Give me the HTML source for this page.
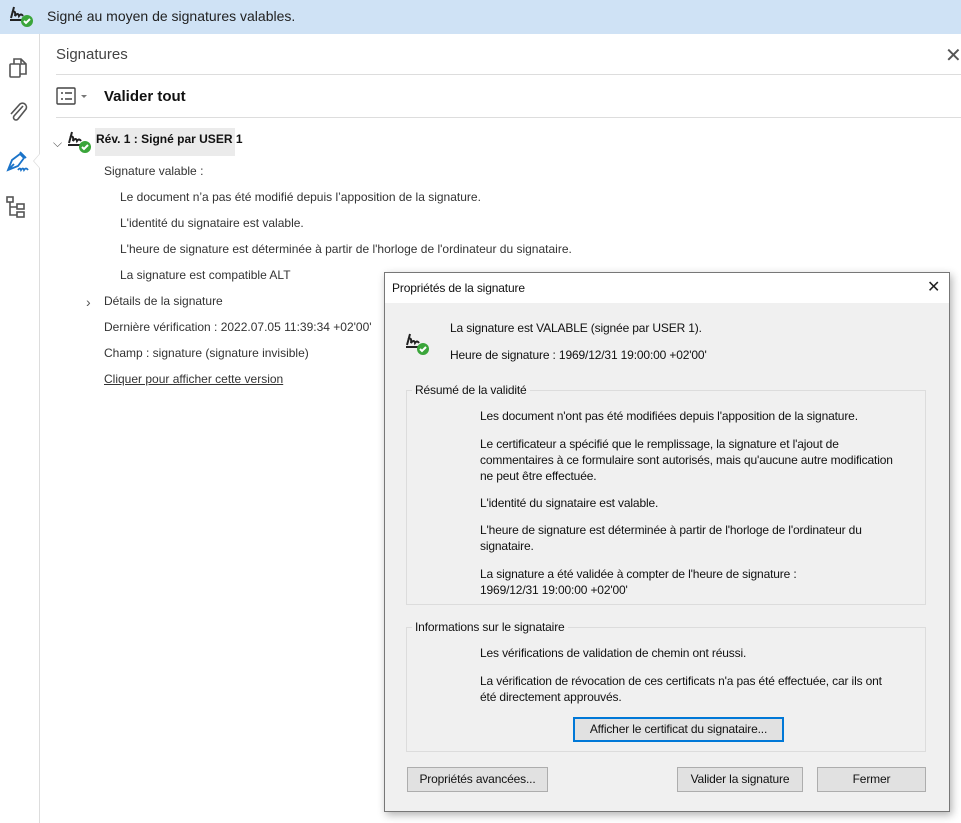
<!DOCTYPE html>
<html><head><meta charset="utf-8"><style>
*{margin:0;padding:0;box-sizing:border-box}
body{width:961px;height:823px;overflow:hidden;background:#fff;font-family:"Liberation Sans",sans-serif;position:relative;color:#222}
.a{position:absolute;white-space:nowrap}
.t{font-size:12px;color:#333}
.d{font-size:12px;color:#111;letter-spacing:-0.15px}
.btn{position:absolute;background:#e1e1e1;border:1px solid #adadad;font-size:12px;text-align:center;color:#111;letter-spacing:-0.15px}
</style></head><body>
<div class="a" style="left:0;top:0;width:961px;height:34px;background:#cfe2f5"></div>
<svg class="a" style="left:8px;top:4px" width="28" height="24" viewBox="0 0 28 24"><path d="M3 14 L6 3 M4 8 Q8 6 7 12 Q10 8 11 12 Q13 9 15 12" stroke="#222" stroke-width="2" fill="none"/><path d="M2 16 H14" stroke="#222" stroke-width="2"/><circle cx="19" cy="17" r="6" fill="#3aa53a"/><path d="M16 17 l2 2 4-4" stroke="#fff" stroke-width="2" fill="none"/></svg>
<div class="a" style="left:47px;top:8px;font-size:14px;color:#222">Signé au moyen de signatures valables.</div>
<div class="a" style="left:39px;top:34px;width:1px;height:789px;background:#ddd"></div>
<svg class="a" style="left:6px;top:56px" width="24" height="24" viewBox="0 0 24 24" fill="none" stroke="#555" stroke-width="1.6"><rect x="4" y="8" width="10" height="13" rx="1"/><path d="M8 8V3h7l5 5v10h-6M15 3v5h5"/></svg>
<svg class="a" style="left:6px;top:100px" width="24" height="24" viewBox="0 0 24 24" fill="none" stroke="#555" stroke-width="1.6"><path d="M17 6 L8 16 a2.5 2.5 0 0 0 4 3 L20 9 a4 4 0 0 0 -6 -5 L5 14"/></svg>
<svg class="a" style="left:4px;top:148px" width="28" height="28" viewBox="0 0 28 28" fill="none" stroke="#1a73c9" stroke-width="1.8"><path d="M4 22 L8 12 L16 6 L20 10 L14 18 Z M4 22 L10 16"/><path d="M14 22 q2-3 3 0 q2-3 3 0 q2-3 4 0"/><path d="M16 4 l6 6"/></svg>
<div class="a" style="left:33px;top:153px;width:0;height:0;border-top:8px solid transparent;border-bottom:8px solid transparent;border-right:7px solid #ddd"></div>
<div class="a" style="left:34px;top:154px;width:0;height:0;border-top:7px solid transparent;border-bottom:7px solid transparent;border-right:6px solid #fff"></div>
<svg class="a" style="left:5px;top:195px" width="24" height="26" viewBox="0 0 24 26" fill="none" stroke="#555" stroke-width="1.6"><rect x="2" y="2" width="6" height="5"/><rect x="12" y="9" width="7" height="5"/><rect x="12" y="17" width="7" height="5"/><path d="M5 7v13h7M5 12h7"/></svg>
<div class="a" style="left:56px;top:46px;font-size:15px;color:#444">Signatures</div>
<div class="a" style="left:945px;top:43px;font-size:20px;color:#555">✕</div>
<div class="a" style="left:56px;top:74px;width:905px;height:1px;background:#ddd"></div>
<svg class="a" style="left:56px;top:87px" width="36" height="20" viewBox="0 0 36 20" fill="none" stroke="#444" stroke-width="1.4"><rect x="1" y="1" width="18" height="16" rx="1"/><path d="M5 6h2M9 6h7M5 12h2M9 12h7"/><path d="M25 8l3 3 3-3" fill="#777" stroke="none"/></svg>
<div class="a" style="left:104px;top:88px;font-size:15px;font-weight:bold;color:#111">Valider tout</div>
<div class="a" style="left:56px;top:117px;width:905px;height:1px;background:#ddd"></div>
<div class="a" style="left:53px;top:136px;font-size:12px;color:#555">⌵</div>
<div class="a" style="left:95px;top:128px;width:140px;height:28px;background:#ebebeb"></div>
<svg class="a" style="left:66px;top:128px" width="28" height="26" viewBox="0 0 28 24"><path d="M3 14 L6 3 M4 8 Q8 6 7 12 Q10 8 11 12 Q13 9 15 12" stroke="#222" stroke-width="2" fill="none"/><path d="M2 16 H14" stroke="#222" stroke-width="2"/><circle cx="19" cy="18" r="6" fill="#3aa53a"/><path d="M16 18 l2 2 4-4" stroke="#fff" stroke-width="2" fill="none"/></svg>
<div class="a" style="left:96px;top:132px;font-size:12px;font-weight:bold;color:#111">Rév. 1 : Signé par USER 1</div>
<div class="a t" style="left:104px;top:164px">Signature valable :</div>
<div class="a t" style="left:120px;top:190px">Le document n’a pas été modifié depuis l’apposition de la signature.</div>
<div class="a t" style="left:120px;top:216px">L'identité du signataire est valable.</div>
<div class="a t" style="left:120px;top:242px">L'heure de signature est déterminée à partir de l'horloge de l'ordinateur du signataire.</div>
<div class="a t" style="left:120px;top:268px">La signature est compatible ALT</div>
<div class="a" style="left:86px;top:294px;font-size:14px;color:#555">›</div>
<div class="a t" style="left:104px;top:294px">Détails de la signature</div>
<div class="a t" style="left:104px;top:320px">Dernière vérification : 2022.07.05 11:39:34 +02'00'</div>
<div class="a t" style="left:104px;top:346px">Champ : signature (signature invisible)</div>
<div class="a t" style="left:104px;top:372px;text-decoration:underline">Cliquer pour afficher cette version</div>

<div class="a" style="left:384px;top:272px;width:566px;height:540px;background:#f0f0f0;border:1px solid #777;box-shadow:2px 3px 8px rgba(0,0,0,.3)"></div>
<div class="a" style="left:385px;top:273px;width:564px;height:30px;background:#fff"></div>
<div class="a d" style="left:392px;top:281px">Propriétés de la signature</div>
<div class="a" style="left:927px;top:277px;font-size:16px;color:#222">✕</div>
<svg class="a" style="left:404px;top:330px" width="28" height="26" viewBox="0 0 28 24"><path d="M3 14 L6 3 M4 8 Q8 6 7 12 Q10 8 11 12 Q13 9 15 12" stroke="#222" stroke-width="2" fill="none"/><path d="M2 16 H14" stroke="#222" stroke-width="2"/><circle cx="19" cy="18" r="6" fill="#3aa53a"/><path d="M16 18 l2 2 4-4" stroke="#fff" stroke-width="2" fill="none"/></svg>
<div class="a d" style="left:450px;top:321px">La signature est VALABLE (signée par USER 1).</div>
<div class="a d" style="left:450px;top:348px">Heure de signature :  1969/12/31 19:00:00 +02'00'</div>
<div class="a" style="left:406px;top:390px;width:520px;height:215px;border:1px solid #dcdcdc"></div>
<div class="a d" style="left:412px;top:383px;background:#f0f0f0;padding:0 3px">Résumé de la validité</div>
<div class="a d" style="left:480px;top:408px;line-height:16px">Les document n'ont pas été modifiées depuis l'apposition de la signature.</div>
<div class="a d" style="left:480px;top:436px;line-height:16px">Le certificateur a spécifié que le remplissage, la signature et l'ajout de<br>commentaires à ce formulaire sont autorisés, mais qu'aucune autre modification<br>ne peut être effectuée.</div>
<div class="a d" style="left:480px;top:495px;line-height:16px">L'identité du signataire est valable.</div>
<div class="a d" style="left:480px;top:522px;line-height:16px">L'heure de signature est déterminée à partir de l'horloge de l'ordinateur du<br>signataire.</div>
<div class="a d" style="left:480px;top:566px;line-height:16px">La signature a été validée à compter de l'heure de signature :<br>1969/12/31 19:00:00 +02'00'</div>
<div class="a" style="left:406px;top:627px;width:520px;height:125px;border:1px solid #dcdcdc"></div>
<div class="a d" style="left:412px;top:620px;background:#f0f0f0;padding:0 3px">Informations sur le signataire</div>
<div class="a d" style="left:480px;top:645px;line-height:16px">Les vérifications de validation de chemin ont réussi.</div>
<div class="a d" style="left:480px;top:673px;line-height:16px">La vérification de révocation de ces certificats n'a pas été effectuée, car ils ont<br>été directement approuvés.</div>
<div class="btn" style="left:573px;top:717px;width:211px;height:25px;border:2px solid #0078d7;line-height:21px">Afficher le certificat du signataire...</div>
<div class="btn" style="left:407px;top:767px;width:141px;height:25px;line-height:23px">Propriétés avancées...</div>
<div class="btn" style="left:677px;top:767px;width:126px;height:25px;line-height:23px">Valider la signature</div>
<div class="btn" style="left:817px;top:767px;width:109px;height:25px;line-height:23px">Fermer</div>
</body></html>
